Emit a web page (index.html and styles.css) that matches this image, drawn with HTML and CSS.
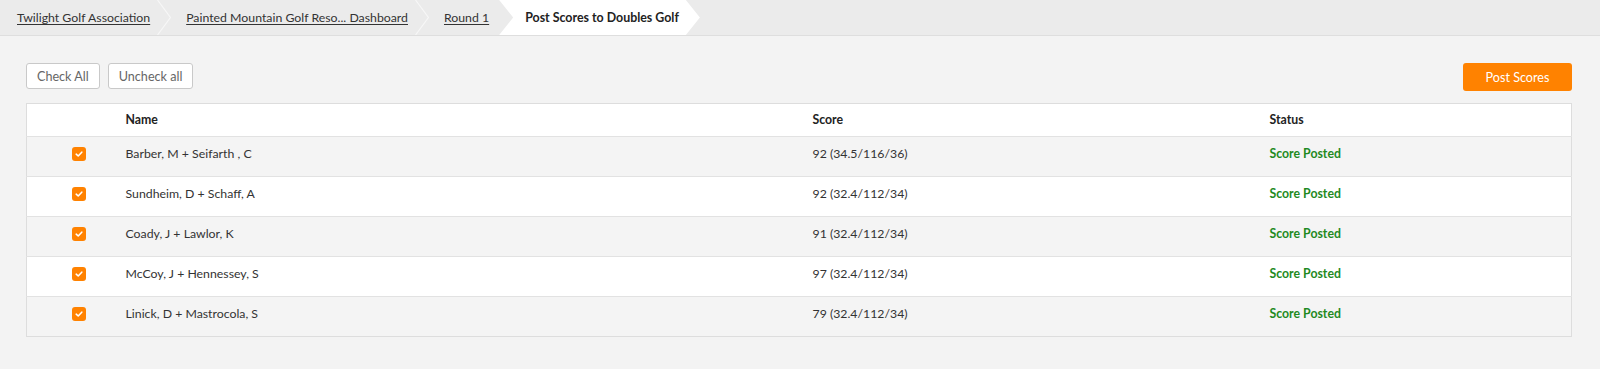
FILE: index.html
```html
<!DOCTYPE html>
<html lang="en">

<head>
  <meta charset="UTF-8" />
  <meta name="viewport" content="width=device-width, initial-scale=1.0" />
  <title>Post Scores to Doubles Golf</title>
  <link rel="stylesheet" href="styles.css">
</head>

<body>
  <nav class="crumbs">
    <a class="crumb" href="#">Twilight Golf Association</a>
    <span class="sep"><svg width="14" height="35" viewBox="0 0 14 35"><polyline points="0.5,0 13.5,17.5 0.5,35" /></svg></span>
    <a class="crumb" href="#">Painted Mountain Golf Reso... Dashboard</a>
    <span class="sep"><svg width="14" height="35" viewBox="0 0 14 35"><polyline points="0.5,0 13.5,17.5 0.5,35" /></svg></span>
    <a class="crumb last-link" href="#">Round 1</a>
    <span class="crumb active">Post Scores to Doubles Golf</span>
  </nav>

  <main class="page">
    <div class="toolbar">
      <div class="toolbar-left">
        <button class="btn">Check All</button>
        <button class="btn">Uncheck all</button>
      </div>
      <button class="btn btn-primary">Post Scores</button>
    </div>

    <table class="scores">
      <thead>
        <tr>
          <th class="col-check"></th>
          <th class="col-name">Name</th>
          <th class="col-score">Score</th>
          <th>Status</th>
        </tr>
      </thead>
      <tbody id="rows"></tbody>
    </table>
  </main>

  <script>
    const teams = [
      ['Barber, M + Seifarth , C', '92 (34.5/116/36)'],
      ['Sundheim, D + Schaff, A', '92 (32.4/112/34)'],
      ['Coady, J + Lawlor, K', '91 (32.4/112/34)'],
      ['McCoy, J + Hennessey, S', '97 (32.4/112/34)'],
      ['Linick, D + Mastrocola, S', '79 (32.4/112/34)']
    ];

    const rows = document.getElementById('rows');

    teams.forEach(([name, score]) => {
      const tr = document.createElement('tr');
      tr.innerHTML = `
        <td class="col-check"><span class="checkbox"><svg width="14" height="14" viewBox="0 0 14 14"><polyline points="4.2,7.2 6.2,9 9.8,5.2" /></svg></span></td>
        <td>${name}</td>
        <td>${score}</td>
        <td class="status">Score Posted</td>`;
      rows.appendChild(tr);
    });
  </script>
</body>

</html>
```

FILE: styles.css
```css
* {
  box-sizing: border-box;
}

html,
body {
  margin: 0;
  padding: 0;
  font-family: "Lato", "Open Sans", sans-serif;
  font-size: 12.3px;
  color: #333;
  background: #f3f3f3;
}

.crumbs {
  display: flex;
  align-items: center;
  height: 36px;
  background: #ebebeb;
  border-bottom: 1px solid #dedede;
  padding-left: 17px;
}

.crumb {
  color: #333;
  text-decoration: underline;
  text-underline-offset: 2px;
  line-height: 35px;
  white-space: nowrap;
}

.sep {
  display: flex;
  margin: 0 15px 0 7px;
}

.sep polyline {
  fill: none;
  stroke: #f7f7f7;
  stroke-width: 1.2;
}

.last-link {
  margin-right: 10px;
}

.crumb.active {
  align-self: flex-start;
  height: 35px;
  background: #fff;
  color: #222;
  font-weight: 700;
  font-size: 12.4px;
  text-decoration: none;
  padding: 0 21px 0 26px;
  clip-path: polygon(0 0, calc(100% - 14px) 0, 100% 50%, calc(100% - 14px) 100%, 0 100%, 14px 50%);
}

.page {
  padding: 27px 28px 30px 26px;
}

.toolbar {
  display: flex;
  justify-content: space-between;
  align-items: flex-start;
  margin-bottom: 12px;
}

.toolbar-left {
  display: flex;
  gap: 8px;
}

.btn {
  font-family: inherit;
  font-size: 12.6px;
  height: 26px;
  padding: 0 10px;
  border: 1px solid #c9c9c9;
  border-radius: 3px;
  background: #fff;
  color: #666;
  cursor: pointer;
}

.btn-primary {
  height: 28px;
  width: 109px;
  border: none;
  background: #ff8200;
  color: #fff;
}

.scores {
  width: 100%;
  border-collapse: collapse;
  table-layout: fixed;
  border: 1px solid #dddddd;
  background: #fff;
}

.scores th {
  height: 33px;
  padding: 0;
  text-align: left;
  font-weight: 700;
  color: #222;
  line-height: 20px;
}

.scores td {
  padding: 7px 0 12px;
  line-height: 20px;
  border-top: 1px solid #e2e2e2;
}

.scores tbody tr:nth-child(odd) {
  background: #f4f4f4;
}

.col-check {
  width: 99px;
}

.col-name {
  width: 687px;
}

.col-score {
  width: 457px;
}

.scores td.col-check {
  padding-left: 45px;
}

.checkbox {
  display: block;
  width: 14px;
  height: 14px;
  border-radius: 3px;
  background: #ff8200;
}

.checkbox svg {
  display: block;
}

.checkbox polyline {
  fill: none;
  stroke: #fff;
  stroke-width: 1.6;
  stroke-linecap: round;
  stroke-linejoin: round;
}

.status {
  color: #1f8a1f;
  font-weight: 700;
}
```
